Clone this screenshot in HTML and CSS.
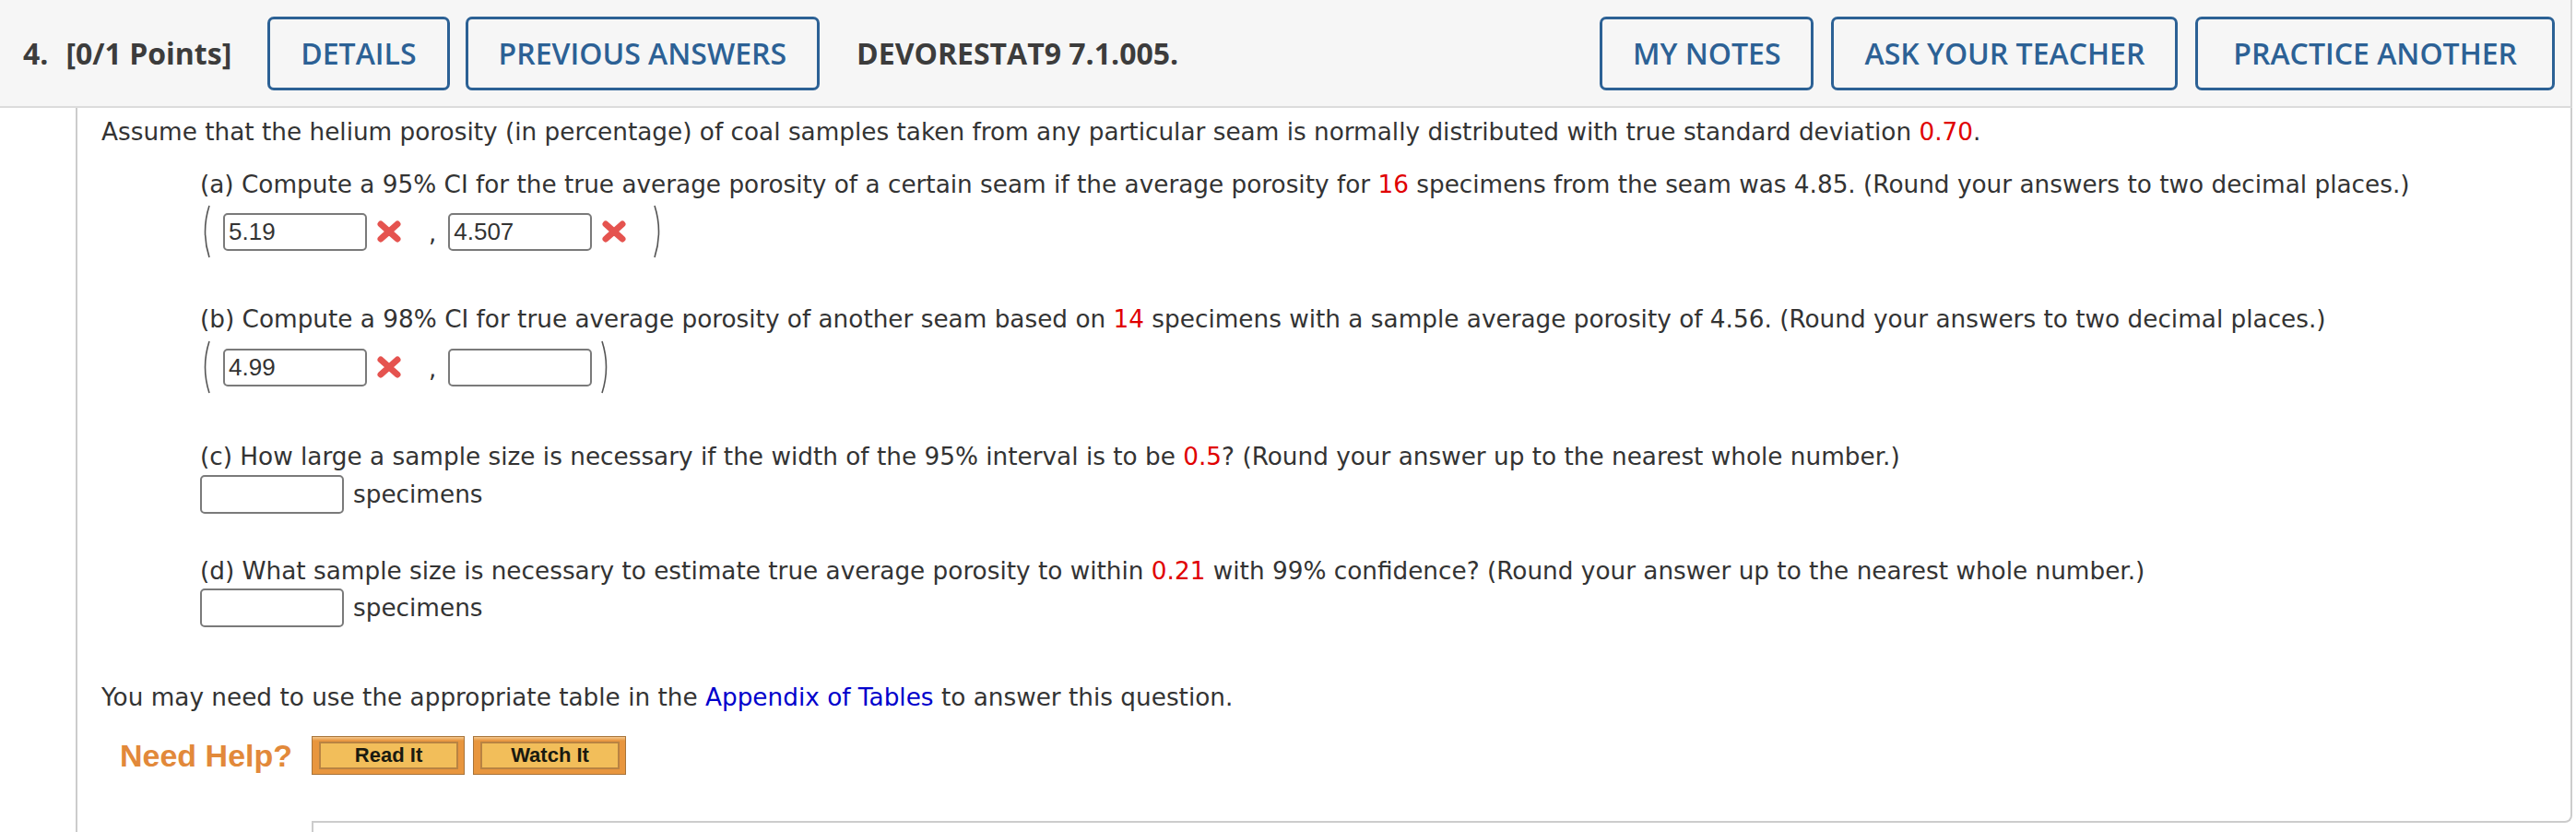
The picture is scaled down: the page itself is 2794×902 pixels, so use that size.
FILE: index.html
```html
<!DOCTYPE html>
<html>
<head>
<meta charset="utf-8">
<link rel="stylesheet" href="styles.css">
</head>
<body>
<div class="page">
  <div class="qhead">
    <span class="qnum">4.</span>
    <span class="qpts">[0/1 Points]</span>
    <a class="hbtn hbtn-details">DETAILS</a>
    <a class="hbtn">PREVIOUS ANSWERS</a>
    <span class="qid">DEVORESTAT9 7.1.005.</span>
    <div class="hright">
      <a class="hbtn">MY NOTES</a>
      <a class="hbtn">ASK YOUR TEACHER</a>
      <a class="hbtn hbtn-wide">PRACTICE ANOTHER</a>
    </div>
  </div>
  <div class="panel">
    <div class="qbody">
      <p class="intro">Assume that the helium porosity (in percentage) of coal samples taken from any particular seam is normally distributed with true standard deviation <span class="red">0.70</span>.</p>

      <div class="part">
        <p class="ptext">(a) Compute a 95% CI for the true average porosity of a certain seam if the average porosity for <span class="red">16</span> specimens from the seam was 4.85. (Round your answers to two decimal places.)</p>
        <div class="ci">
          <svg class="paren" width="14" height="58" viewBox="0 0 14 58"><path d="M10 1 Q1 29 10 57" fill="none" stroke="#555" stroke-width="1.6"/></svg>
          <input class="ans ans-ci" value="5.19">
          <svg class="xmark" width="28" height="26" viewBox="0 0 28 26"><path d="M5 5 L23 21 M23 5 L5 21" stroke="#e5534f" stroke-width="7" stroke-linecap="round"/></svg>
          <span class="comma">,</span>
          <input class="ans ans-ci" value="4.507">
          <svg class="xmark" width="28" height="26" viewBox="0 0 28 26"><path d="M5 5 L23 21 M23 5 L5 21" stroke="#e5534f" stroke-width="7" stroke-linecap="round"/></svg>
          <svg class="paren paren-r" width="14" height="58" viewBox="0 0 14 58"><path d="M4 1 Q13 29 4 57" fill="none" stroke="#555" stroke-width="1.6"/></svg>
        </div>
      </div>

      <div class="part part-b">
        <p class="ptext">(b) Compute a 98% CI for true average porosity of another seam based on <span class="red">14</span> specimens with a sample average porosity of 4.56. (Round your answers to two decimal places.)</p>
        <div class="ci ci-b">
          <svg class="paren" width="14" height="58" viewBox="0 0 14 58"><path d="M10 1 Q1 29 10 57" fill="none" stroke="#555" stroke-width="1.6"/></svg>
          <input class="ans ans-ci" value="4.99">
          <svg class="xmark" width="28" height="26" viewBox="0 0 28 26"><path d="M5 5 L23 21 M23 5 L5 21" stroke="#e5534f" stroke-width="7" stroke-linecap="round"/></svg>
          <span class="comma">,</span>
          <input class="ans ans-ci" value="">
          <svg class="paren paren-r2" width="14" height="58" viewBox="0 0 14 58"><path d="M4 1 Q13 29 4 57" fill="none" stroke="#555" stroke-width="1.6"/></svg>
        </div>
      </div>

      <div class="part part-c">
        <p class="ptext">(c) How large a sample size is necessary if the width of the 95% interval is to be <span class="red">0.5</span>? (Round your answer up to the nearest whole number.)</p>
        <div class="unitrow">
          <input class="ans ans-n" value="">
          <span class="unit">specimens</span>
        </div>
      </div>

      <div class="part part-d">
        <p class="ptext">(d) What sample size is necessary to estimate true average porosity to within <span class="red">0.21</span> with 99% confidence? (Round your answer up to the nearest whole number.)</p>
        <div class="unitrow unitrow-d">
          <input class="ans ans-n" value="">
          <span class="unit">specimens</span>
        </div>
      </div>

      <p class="note">You may need to use the appropriate table in the <a class="link">Appendix of Tables</a> to answer this question.</p>

      <div class="help">
        <span class="needhelp">Need Help?</span>
        <span class="hlpbtn"><span class="hlpin">Read It</span></span>
        <span class="hlpbtn"><span class="hlpin">Watch It</span></span>
      </div>
    </div>
    <div class="qfoot">
      <div class="qfoot-space"></div>
      <div class="qfoot-corner"></div>
    </div>
    <div class="nextbox"></div>
  </div>
</div>
</body>
</html>
```

FILE: styles.css
```css
html, body {
  margin: 0;
  padding: 0;
  background: #ffffff;
  overflow: hidden;
}

.page {
  width: 2790px;
  height: 902px;
  overflow: hidden;
}

.qhead {
  display: flex;
  align-items: center;
  box-sizing: border-box;
  width: 2790px;
  height: 117px;
  background: #f6f6f6;
  border-bottom: 2px solid #dcdcdc;
  border-right: 2px solid #d4d4d4;
  padding: 0 17px 0 25px;
  font-family: "Open Sans", "DejaVu Sans", sans-serif;
}

.qnum, .qpts, .qid {
  font-weight: 700;
  font-size: 32px;
  color: #3c3c3c;
}

.qpts {
  margin-left: 19px;
}

.qid {
  margin-left: 40px;
}

.hbtn {
  display: flex;
  align-items: center;
  justify-content: center;
  box-sizing: border-box;
  height: 80px;
  padding: 0 33px;
  border: 3px solid #2c6195;
  border-radius: 7px;
  color: #2c6195;
  font-weight: 600;
  font-size: 32px;
  margin-left: 17px;
  white-space: nowrap;
}

.hbtn-details {
  margin-left: 39px;
}

.hright {
  margin-left: auto;
  display: flex;
}

.hright .hbtn {
  margin-left: 19px;
}

.hright .hbtn-wide {
  padding: 0 38px;
}

.panel {
  margin-left: 82px;
  width: 2706px;
  border-left: 2px solid #cccccc;
  font-family: "DejaVu Sans", Verdana, sans-serif;
  font-size: 26.3px;
  line-height: 32px;
  color: #333333;
}

.qbody {
  padding: 10px 0 0 26px;
  border-right: 2px solid #cccccc;
}

.qbody p {
  margin: 0;
}

.red {
  color: #e00000;
}

.part {
  margin-left: 107px;
  margin-top: 25px;
}

.part-b {
  margin-top: 48px;
}

.part-c {
  margin-top: 50px;
}

.part-d {
  margin-top: 46px;
}

.ci {
  display: flex;
  align-items: center;
  height: 62px;
  margin-top: 4px;
}

.ci-b {
  margin-top: 5px;
}

.paren {
  display: block;
  margin-right: 11px;
}

.paren-r {
  margin-left: 26px;
  margin-right: 0;
}

.paren-r2 {
  margin-left: 7px;
  margin-right: 0;
}

.ans {
  box-sizing: border-box;
  height: 41px;
  border: 2px solid #7a7a7a;
  border-radius: 5px;
  background: #fff;
  font-family: "Liberation Sans", Arial, sans-serif;
  font-size: 26px;
  color: #333;
  padding: 0 4px;
  margin: 0;
  outline: none;
}

.ans-ci {
  width: 156px;
}

.ans-n {
  width: 156px;
  height: 42px;
}

.xmark {
  display: block;
  margin-left: 10px;
}

.comma {
  margin-left: 29px;
  margin-right: 13px;
  font-size: 26px;
  position: relative;
  top: 2px;
}

.unitrow {
  display: flex;
  align-items: center;
  margin-top: 4px;
}

.unitrow-d {
  margin-top: 3px;
}

.unit {
  margin-left: 10px;
}

.qbody .note {
  margin-top: 60px;
}

.link {
  color: #0000cc;
}

.help {
  display: flex;
  align-items: center;
  margin-top: 26px;
  margin-left: 20px;
  height: 42px;
}

.needhelp {
  font-family: "Liberation Sans", Arial, sans-serif;
  font-weight: 700;
  font-size: 34px;
  color: #e2893a;
  margin-right: 21px;
}

.hlpbtn {
  box-sizing: border-box;
  width: 166px;
  height: 42px;
  background: linear-gradient(#f4c890 0, #e8963e 4px, #e8963e 100%);
  border: 1px solid #a8743a;
  padding: 5px 6px 5px 7px;
  margin-right: 9px;
  display: flex;
}

.hlpin {
  flex: 1;
  display: flex;
  align-items: center;
  justify-content: center;
  background: #f2be5a;
  border: 2px solid #b98342;
  font-family: "Liberation Sans", Arial, sans-serif;
  font-weight: 700;
  font-size: 22px;
  color: #1a1a10;
}

.qfoot {
  display: flex;
  height: 52px;
}

.qfoot-space {
  width: 254px;
}

.qfoot-corner {
  flex: 1;
  box-sizing: border-box;
  border-right: 2px solid #cccccc;
  border-bottom: 2px solid #cccccc;
  border-bottom-right-radius: 8px;
}

.nextbox {
  margin-left: 254px;
  height: 30px;
  border-left: 2px solid #cccccc;
}
```
